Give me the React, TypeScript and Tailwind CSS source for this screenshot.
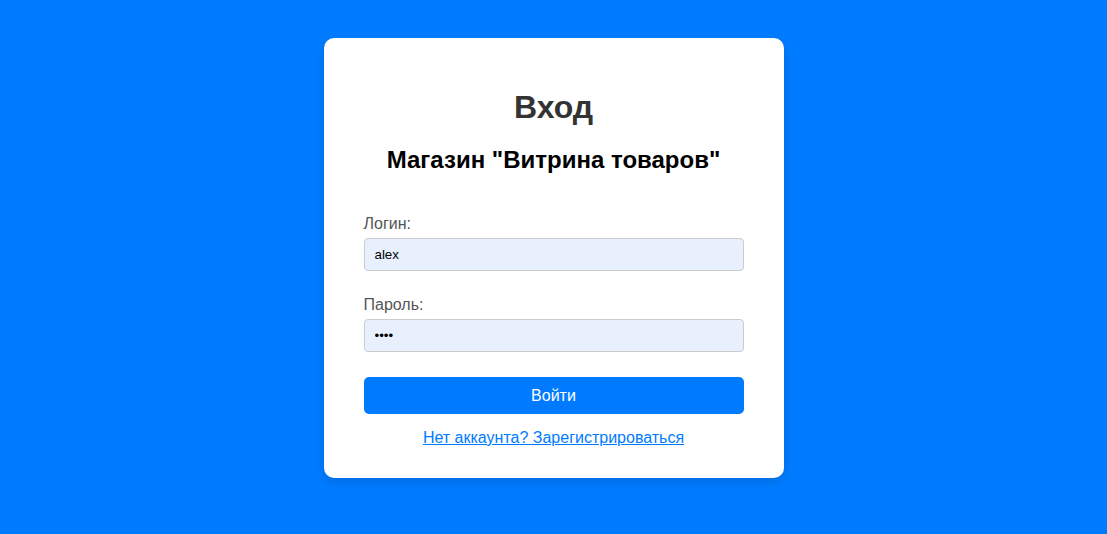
import React from 'react';

const fontStack = "font-['Liberation_Sans',Arial,sans-serif]";

function Field({ label, type, value, className }: { label: string; type: string; value: string; className?: string }) {
  return (
    <div className={`flex flex-col ${className ?? ''}`}>
      <label className="text-[16px] leading-[18px] text-[#555] mb-[5px]">{label}</label>
      <input
        type={type}
        value={value}
        readOnly
        className="h-[33px] w-full rounded-[4px] border border-[#ccc] bg-[#e8f0fe] px-[10px] text-[13.33px] text-black outline-none"
      />
    </div>
  );
}

export default function App() {
  return (
    <div className={`min-h-[534px] w-full bg-[#007bff] pt-[38px] ${fontStack}`}>
      <div className="mx-auto flex w-[460px] flex-col rounded-[10px] bg-white px-[40px] pt-[30px] pb-[31px] shadow-[0_4px_10px_rgba(0,0,0,0.12)]">
        <h1 className="mt-[21px] text-center text-[32px] leading-[37px] font-bold text-[#333]">Вход</h1>
        <h2 className="mt-[20px] text-center text-[24px] leading-[28px] font-bold text-black">
          Магазин "Витрина товаров"
        </h2>
        <Field label="Логин:" type="text" value="alex" className="mt-[41px]" />
        <Field label="Пароль:" type="password" value="1234" className="mt-[25px]" />
        <button className="mt-[25px] h-[37px] w-full rounded-[5px] bg-[#007bff] text-[16px] text-white">
          Войти
        </button>
        <a href="#" className="mt-[15px] text-center text-[16px] leading-[18px] text-[#007bff] underline">
          Нет аккаунта? Зарегистрироваться
        </a>
      </div>
    </div>
  );
}
